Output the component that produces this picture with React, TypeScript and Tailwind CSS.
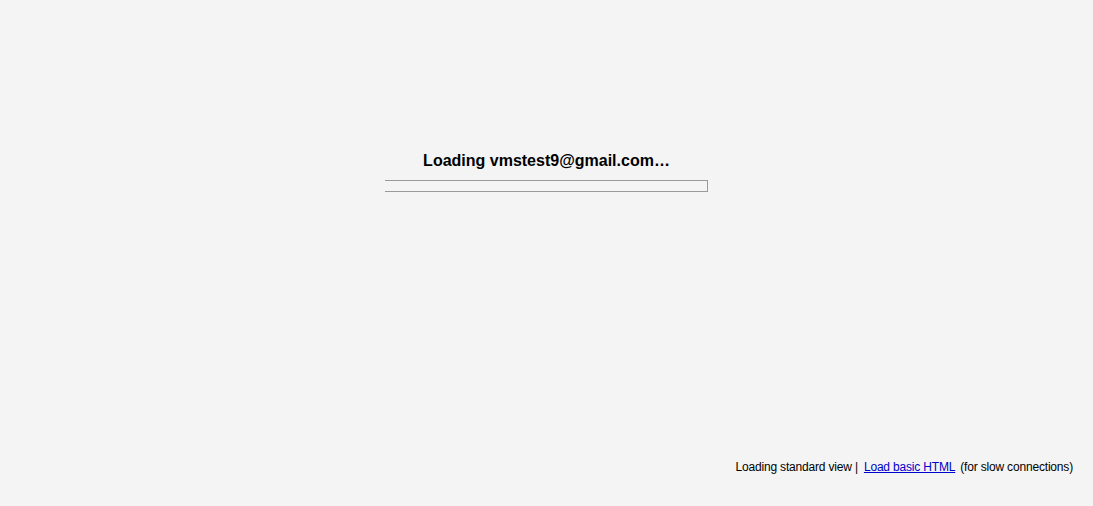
import React from 'react';

export default function App() {
  return (
    <div className="w-full h-[506px] bg-[#f4f4f4] flex flex-col font-['Liberation_Sans',Arial,sans-serif] text-black">
      <div className="flex flex-col items-center pt-[151px]">
        <div className="text-[16px] font-bold leading-[19px]">Loading vmstest9@gmail.com…</div>
        <div className="mt-[10px] w-[323px] h-[12px] border-t border-b border-r border-[#9a9a9a]"></div>
      </div>
      <div className="flex-1" />
      <div className="flex justify-end pr-[20px] pb-[32px] text-[12px] leading-[14px] tracking-[-0.18px]">
        <span>Loading standard view |</span>
        <a href="#" className="text-[#0000cc] underline ml-[6px]">Load basic HTML</a>
        <span className="ml-[5px]">(for slow connections)</span>
      </div>
    </div>
  );
}
